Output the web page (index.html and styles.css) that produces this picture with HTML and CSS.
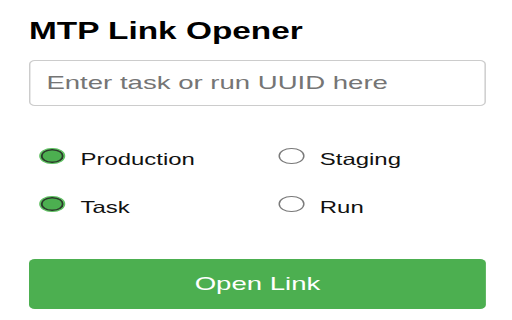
FILE: index.html
```html
<!DOCTYPE html>
<html lang="en">
<head>
<meta charset="utf-8">
<title>MTP Link Opener</title>
<link rel="stylesheet" href="styles.css">
</head>
<body>
<main class="popup">
  <h1 class="title">MTP Link Opener</h1>
  <input class="uuid-input" type="text" placeholder="Enter task or run UUID here">
  <div class="options">
    <label class="option"><input class="radio" type="radio" name="env" checked><span>Production</span></label>
    <label class="option"><input class="radio" type="radio" name="env"><span>Staging</span></label>
    <label class="option"><input class="radio" type="radio" name="kind" checked><span>Task</span></label>
    <label class="option"><input class="radio" type="radio" name="kind"><span>Run</span></label>
  </div>
  <button class="open-btn" type="button">Open Link</button>
</main>
</body>
</html>
```
FILE: styles.css
```css
html, body {
  margin: 0;
  padding: 0;
  background: #fff;
  overflow: hidden;
}

.popup {
  width: 353px;
  box-sizing: border-box;
  padding: 17px 18px 0 20px;
  transform: scaleX(1.4504);
  transform-origin: 0 0;
  font-family: "Liberation Sans", Arial, sans-serif;
}

.title {
  margin: 0;
  font-size: 23px;
  line-height: 28px;
  font-weight: 700;
  color: #000;
}

.uuid-input {
  display: block;
  box-sizing: border-box;
  width: 315px;
  height: 46px;
  margin: 15px 0 0;
  padding: 0 11px;
  border: 1px solid #cccccc;
  border-radius: 4px;
  font-family: inherit;
  font-size: 19px;
  color: #333;
  background: #fff;
  outline: none;
}

.uuid-input::placeholder {
  color: #757575;
}

.options {
  display: grid;
  grid-template-columns: 165px 1fr;
  row-gap: 25px;
  margin-top: 41.5px;
  padding-left: 7px;
}

.option {
  display: flex;
  align-items: center;
  gap: 11px;
  font-size: 16.5px;
  line-height: 20px;
  color: #111;
}

.radio {
  appearance: none;
  -webkit-appearance: none;
  flex: none;
  width: 17.5px;
  height: 16px;
  margin: 0 0 7px 0;
  box-sizing: border-box;
  border: 1px solid #7a7a7a;
  border-radius: 50%;
  background: #fff;
}

.radio:checked {
  border: 1.6px solid #62c265;
  background: #4caf50;
  box-shadow: inset 0 0 0 1.4px #2c3a2c;
}

.open-btn {
  display: block;
  width: 315px;
  height: 50px;
  margin-top: 40px;
  padding: 0;
  border: none;
  border-radius: 4px;
  background: #4caf50;
  color: #fff;
  font-family: inherit;
  font-size: 19px;
}
```
